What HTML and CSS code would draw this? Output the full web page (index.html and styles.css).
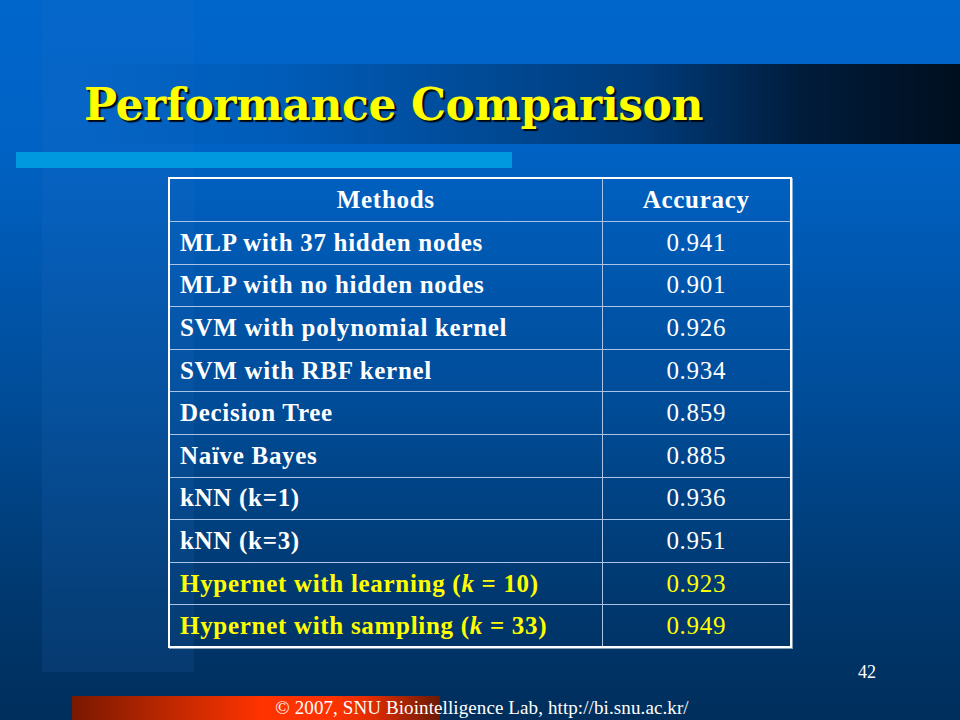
FILE: index.html
```html
<!DOCTYPE html>
<html>
<head>
<meta charset="utf-8">
<link rel="stylesheet" href="styles.css">
</head>
<body>
<div class="slide">
  <div class="side-panel"></div>
  <div class="content">
    <div class="title-bar"><h1 class="title">Performance Comparison</h1></div>
    <div class="accent-bar"></div>
    <table class="results">
      <tr class="head"><th class="m">Methods</th><th class="a">Accuracy</th></tr>
      <tr><td class="m">MLP with 37 hidden nodes</td><td class="a">0.941</td></tr>
      <tr><td class="m">MLP with no hidden nodes</td><td class="a">0.901</td></tr>
      <tr><td class="m">SVM with polynomial kernel</td><td class="a">0.926</td></tr>
      <tr><td class="m">SVM with RBF kernel</td><td class="a">0.934</td></tr>
      <tr><td class="m">Decision Tree</td><td class="a">0.859</td></tr>
      <tr><td class="m">Naïve Bayes</td><td class="a">0.885</td></tr>
      <tr><td class="m">kNN (k=1)</td><td class="a">0.936</td></tr>
      <tr><td class="m">kNN (k=3)</td><td class="a">0.951</td></tr>
      <tr class="hl"><td class="m">Hypernet with learning (<i>k</i> = 10)</td><td class="a">0.923</td></tr>
      <tr class="hl"><td class="m">Hypernet with sampling (<i>k</i> = 33)</td><td class="a">0.949</td></tr>
    </table>
    <div class="page-num">42</div>
  </div>
  <div class="footer">
    <div class="footer-bar"></div>
    <div class="footer-text">© 2007, SNU Biointelligence Lab, http://bi.snu.ac.kr/</div>
  </div>
</div>
</body>
</html>
```
FILE: styles.css
```css
html, body {
  margin: 0;
  padding: 0;
}
body {
  width: 960px;
  height: 720px;
  overflow: hidden;
  font-family: "Liberation Serif", "Times New Roman", serif;
}
.slide {
  position: relative;
  width: 960px;
  height: 720px;
  background: linear-gradient(to bottom, #0066cc 0px, #0062c4 150px, #004c98 400px, #00386e 600px, #002e5c 720px);
  overflow: hidden;
}
.side-panel {
  position: absolute;
  left: 42px;
  top: 0;
  width: 152px;
  height: 672px;
  background: rgba(40, 110, 200, 0.14);
}
.content {
  position: relative;
  padding-top: 64px;
  height: 632px;
}
.title-bar {
  margin-left: 80px;
  height: 80px;
  background: linear-gradient(to right, rgba(0,98,196,0) 0px, #005cb8 200px, #003c7c 560px, #001c3c 720px, #000f1e 880px);
  display: flex;
  align-items: center;
}
.title {
  margin: 0 0 0 4px;
  font-family: "DejaVu Serif", serif;
  font-weight: bold;
  font-size: 44px;
  color: #ffff00;
  letter-spacing: -0.4px;
  text-shadow: 2px 2px 1px #000814;
  line-height: 1;
  padding-top: 2px;
}
.accent-bar {
  margin: 8px 0 0 16px;
  width: 496px;
  height: 16px;
  background: #0098df;
}
.results {
  margin: 9px 0 0 168px;
  width: 624px;
  border-collapse: collapse;
  border: 2px solid #ffffff;
  box-shadow: 1px 1px 0 rgba(255,255,255,0.5);
  color: #ffffff;
  font-size: 25px;
  letter-spacing: 0.7px;
}
.results th, .results td {
  height: 42.6px;
  padding: 0 0 0 10px;
  border: 1px solid #a9c4e6;
  box-sizing: border-box;
}
.results td.m { font-weight: bold; text-align: left; }
.results th.m { width: 433px; text-align: center; padding: 0; }
.results .a { text-align: center; padding: 0; }
.results td.a { font-weight: normal; }
.results tr.head th { height: 43.5px; }
.results tr.hl td { color: #ffff00; }
.results i { font-style: italic; }
.page-num {
  position: absolute;
  left: 858px;
  top: 662px;
  color: #ffffff;
  font-size: 18px;
}
.footer {
  position: absolute;
  left: 0;
  top: 696px;
  width: 960px;
  height: 24px;
}
.footer-bar {
  position: absolute;
  left: 72px;
  top: 0;
  width: 368px;
  height: 24px;
  background: linear-gradient(to right, #7a1800 0px, #c02800 100px, #ff3300 190px, #ff3300 260px, #e02c00 300px, #6a1a06 368px);
}
.footer-text {
  position: relative;
  text-align: center;
  padding-left: 4px;
  color: #ffffff;
  font-size: 19px;
  line-height: 24px;
  letter-spacing: 0.1px;
}
```
